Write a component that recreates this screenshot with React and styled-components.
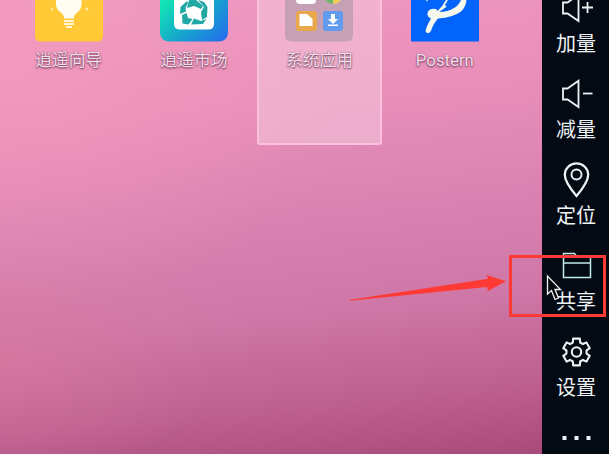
import React from 'react';
import styled, { createGlobalStyle } from 'styled-components';

const Global = createGlobalStyle`
  * { box-sizing: border-box; }
  body { margin: 0; overflow: hidden; }
`;

const Window = styled.div`
  position: relative;
  display: flex;
  width: 609px;
  height: 454px;
  overflow: hidden;
  background: #030a13;
`;

const HomeScreen = styled.main`
  width: 542px;
  height: 454px;
  padding-left: 6px;
  background:
    radial-gradient(ellipse 340px 250px at 0 60px, rgba(248, 158, 190, 0.55), transparent),
    radial-gradient(ellipse 220px 120px at 0 360px, rgba(222, 122, 155, 0.45), transparent),
    linear-gradient(174deg, #ee98c0 0%, #e98fba 25%, #da83b2 47%, #d079a8 66%, #bd6090 86%, #a84b7a 100%);
`;

const AppGrid = styled.div`
  display: grid;
  grid-template-columns: repeat(4, 125.4px);
`;

const AppCell = styled.div`
  display: flex;
  flex-direction: column;
  align-items: center;
  height: 145px;
  border: 2px solid ${(p) => (p.$selected ? 'rgba(255, 200, 227, 0.8)' : 'transparent')};
  border-top: 0;
  border-radius: 0 0 3px 3px;
  background: ${(p) => (p.$selected ? 'rgba(245, 205, 224, 0.5)' : 'transparent')};
`;

const AppIcon = styled.svg`
  display: block;
  width: 68px;
  height: 42px;
`;

const AppLabel = styled.span`
  margin-top: 8px;
  font: 16.8px/21px Roboto, 'Noto Sans CJK SC', sans-serif;
  color: #f3dde9;
  text-shadow: 0 1px 2px rgba(75, 30, 60, 0.85), 0 0 1px rgba(75, 30, 60, 0.5);
  white-space: nowrap;
`;

const Sidebar = styled.aside`
  display: flex;
  flex-direction: column;
  width: 67px;
  height: 454px;
  background: #030a13;
`;

const Tool = styled.div`
  display: flex;
  flex: 0 0 86px;
  flex-direction: column;
  align-items: center;
  margin-top: ${(p) => (p.$first ? '-10px' : '0')};
  padding-left: 1px;
`;

const ToolIcon = styled.svg`
  display: block;
  width: 36px;
  height: 36px;
  overflow: visible;
  fill: none;
  stroke: #eef2f4;
  stroke-width: ${(p) => p.$weight || 1.8};
`;

const ToolLabel = styled.span`
  margin-top: 3px;
  font: 20px/28px 'Noto Sans CJK SC', sans-serif;
  color: #f0f3f5;
`;

const Highlight = styled.div`
  position: absolute;
  left: 509px;
  top: 255px;
  width: 97px;
  height: 62px;
  border: 3px solid #ff3a35;
`;

const Arrow = styled.svg`
  position: absolute;
  left: 349px;
  top: 274px;
  width: 158px;
  height: 28px;
`;

const Cursor = styled.svg`
  position: absolute;
  left: 546px;
  top: 274px;
  width: 17px;
  height: 28px;
`;

const Bulb = () => (
  <AppIcon viewBox="0 0 68 42">
    <path d="M0 0H68V36Q68 41.5 62 41.5H6Q0 41.5 0 36Z" fill="#ffca36" />
    <path d="M21 0H46.500Q48 9 41 13.500Q39 15 39 18.500H29Q29 15 27 13.500Q19.500 9 21 0Z" fill="#fffdf2" />
    <path d="M29 21H39M29 24H39M31 27H37" stroke="#fff6d5" strokeWidth="2" />
    <path d="M18 8L16 10M50.500 8L53 10" stroke="#ffe9a5" strokeWidth="2" />
  </AppIcon>
);

const Market = () => (
  <AppIcon viewBox="0 0 68 42">
    <defs>
      <linearGradient id="market" x1="0" y1="0.2" x2="1" y2="0.8">
        <stop offset="0" stopColor="#12e3b6" />
        <stop offset="0.5" stopColor="#16a5cc" />
        <stop offset="1" stopColor="#2273e8" />
      </linearGradient>
    </defs>
    <path d="M0 0H68V32Q68 41.5 58 41.5H10Q0 41.5 0 32Z" fill="url(#market)" />
    <path d="M14 0H54V24Q54 29.5 48 29.5H20Q14 29.5 14 24Z" fill="#fff" />
    <g fill="#21a8a5">
      <path d="M29 0H36L43 6L41 9L34 6L27 8Z" />
      <path d="M38 0L44 2L47.500 7L47 17L42 20L41 12L44 7Z" />
      <path d="M46.500 19L43 24L31 24.500L34 18.500L41 21Z" />
      <path d="M28.500 24.500L22.500 23.500L22 15L26.500 13L28 18L32.500 19Z" />
      <path d="M20 14L20.500 7L27 1L28 3L25.500 8L26 11.500Z" />
    </g>
  </AppIcon>
);

const SystemFolder = () => (
  <AppIcon viewBox="0 0 68 42">
    <path d="M0 0H68V35Q68 41.5 61 41.5H7Q0 41.5 0 35Z" fill="#c6a0b5" />
    <path d="M11 0H31Q31 4 27 4H15Q11 4 11 0Z" fill="#fff" />
    <path d="M40 0H48V4Q43 3 40 0Z" fill="#6eb968" />
    <path d="M48 0H56Q53 4 48 4Z" fill="#f2ce57" />
    <rect x="11" y="11" width="21" height="20" rx="3" fill="#e9a84c" />
    <path d="M14.500 14H22L27.500 19V26H14.500Z" fill="#fff" />
    <rect x="38" y="11" width="20" height="20" rx="3" fill="#609bee" />
    <path d="M46 14H50V19H53L48 24L43 19H46ZM43 24.500H53V26H43Z" fill="#fff" />
  </AppIcon>
);

const Postern = () => (
  <AppIcon viewBox="0 0 68 42">
    <path d="M0 0H68V41.5H0Z" fill="#0264fb" />
    <path d="M17 0L15 1" fill="none" stroke="#dbe9ee" strokeWidth="1" />
    <path d="M36 0Q33 6 27 12M35 6L28 11" fill="none" stroke="#f5f8ed" strokeWidth="1.800" />
    <path d="M55.500 0Q55 7 50 11.500Q42 17.500 27 18.500Q22 24 20 31Q17 35 14.500 31.500Q15 27 20 18.500Q16 17 16.500 13Q18 8 25 9L28 12Q37 12 43 8Q48 5 50 0Z" fill="#f5f8ed" />
  </AppIcon>
);

const Speaker = ({ plus }) => (
  <ToolIcon viewBox="0 0 36 36">
    <path d="M5 12.500H9.500L20.500 4.800V31L9.500 23.500H5Z" />
    <path d={plus ? 'M24 17.500H35M29.500 12V23' : 'M25 17.500H34.500'} />
  </ToolIcon>
);

const Pin = () => (
  <ToolIcon viewBox="0 0 36 36" $weight={2.3}>
    <path d="M18.500 34Q6.800 20 6.800 12.700A11.700 11.300 0 0 1 30.200 12.700Q30.200 20 18.500 34Z" />
    <circle cx="18.500" cy="12.500" r="5" strokeWidth="1.900" />
  </ToolIcon>
);

const Folder = () => (
  <ToolIcon viewBox="0 0 36 36" $weight={1.5}>
    <path d="M5.500 29.500V5.500H16.500L19 9H32.500V29.500ZM5.500 15H32.500" stroke="#c0ebe7" />
  </ToolIcon>
);

const gearPoints = Array.from({ length: 6 }, (_, i) =>
  [[-21, 10.2], [-14, 13.8], [14, 13.8], [21, 10.2]].map(([deg, r]) => {
    const a = ((i * 60 + deg - 90) * Math.PI) / 180;
    return `${18.5 + r * Math.cos(a)},${18 + r * Math.sin(a)}`;
  }).join(' ')
).join(' ');

const Gear = () => (
  <ToolIcon viewBox="0 0 36 36" $weight={2.1}>
    <polygon points={gearPoints} strokeLinejoin="round" />
    <circle cx="18.500" cy="18" r="4.700" />
  </ToolIcon>
);

const More = () => (
  <ToolIcon viewBox="0 0 36 36">
    <path d="M4.500 18H8.500M16.500 18H20.500M28.500 18H32.500" strokeWidth="4" />
  </ToolIcon>
);

const apps = [
  { name: '逍遥向导', Icon: Bulb },
  { name: '逍遥市场', Icon: Market },
  { name: '系统应用', Icon: SystemFolder, selected: true },
  { name: 'Postern', Icon: Postern },
];

const tools = [
  { name: '加量', icon: <Speaker plus /> },
  { name: '减量', icon: <Speaker /> },
  { name: '定位', icon: <Pin /> },
  { name: '共享', icon: <Folder /> },
  { name: '设置', icon: <Gear /> },
  { name: '', icon: <More /> },
];

export default function App() {
  return (
    <Window>
      <Global />
      <HomeScreen>
        <AppGrid>
          {apps.map(({ name, Icon, selected }) => (
            <AppCell key={name} $selected={selected}>
              <Icon />
              <AppLabel>{name}</AppLabel>
            </AppCell>
          ))}
        </AppGrid>
      </HomeScreen>
      <Sidebar>
        {tools.map(({ name, icon }, i) => (
          <Tool key={i} $first={i === 0}>
            {icon}
            {name && <ToolLabel>{name}</ToolLabel>}
          </Tool>
        ))}
      </Sidebar>
      <Cursor viewBox="0 0 17 28">
        <path d="M1.500 2V20L5.500 16.500L9 25.500L12.500 24L9 15.500H14.500Z" fill="#05080d" stroke="#f4f4f5" strokeWidth="1.300" />
      </Cursor>
      <Highlight />
      <Arrow viewBox="0 0 158 28">
        <path d="M0 26L139 4.800L137.500 1L157 7.300L139 17L138 13L1 26.800Z" fill="#ff3a35" />
      </Arrow>
    </Window>
  );
}
